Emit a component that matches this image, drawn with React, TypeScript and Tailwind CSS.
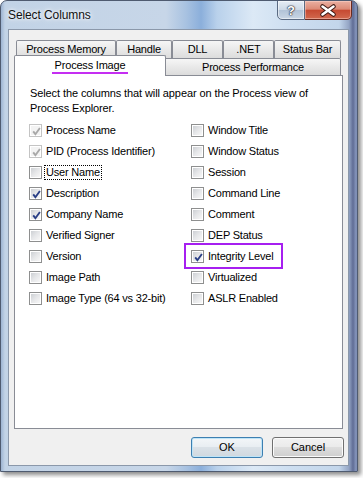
import React from "react";

type Item = { label: string; checked?: boolean; disabled?: boolean; focus?: boolean; highlight?: boolean };

const leftItems: Item[] = [
  { label: "Process Name", checked: true, disabled: true },
  { label: "PID (Process Identifier)", checked: true, disabled: true },
  { label: "User Name", focus: true },
  { label: "Description", checked: true },
  { label: "Company Name", checked: true },
  { label: "Verified Signer" },
  { label: "Version" },
  { label: "Image Path" },
  { label: "Image Type (64 vs 32-bit)" },
];

const rightItems: Item[] = [
  { label: "Window Title" },
  { label: "Window Status" },
  { label: "Session" },
  { label: "Command Line" },
  { label: "Comment" },
  { label: "DEP Status" },
  { label: "Integrity Level", checked: true, highlight: true },
  { label: "Virtualized" },
  { label: "ASLR Enabled" },
];

function CheckBox({ checked, disabled }: { checked?: boolean; disabled?: boolean }) {
  return (
    <span
      className={
        "relative block w-[13px] h-[13px] shrink-0 border bg-white p-px " +
        (disabled ? "border-[#c4c4c4]" : "border-[#8e8f8f]")
      }
    >
      <span
        className={
          "block w-full h-full " +
          (disabled
            ? "bg-[#f3f3f3]"
            : "bg-linear-to-br from-[#cdd0d4] via-[#e6e7e9] to-[#f7f7f7]")
        }
      />
      {checked && (
        <svg className="absolute left-0 top-0" width="13" height="13" viewBox="0 0 13 13">
          <path
            d="M3.2 6.4 L5.4 9.2 L9.9 3"
            fill="none"
            stroke={disabled ? "#a8a8a8" : "#2a3f86"}
            strokeWidth="1.9"
            strokeLinejoin="miter"
          />
        </svg>
      )}
    </span>
  );
}

function Row({ item }: { item: Item }) {
  return (
    <div className="relative flex h-[21px] items-center">
      <CheckBox checked={item.checked} disabled={item.disabled} />
      <span
        className={
          "ml-[2px] border px-px leading-[13px] whitespace-nowrap " +
          (item.focus ? "border-dotted border-black" : "border-transparent")
        }
      >
        {item.label}
      </span>
      {item.highlight && (
        <div className="absolute left-[-7px] top-[-3px] w-[99px] h-[26px] border-2 border-[#a61ff0]" />
      )}
    </div>
  );
}

const tabBase =
  "h-[18px] border border-b-0 border-[#898c95] rounded-t-[2px] bg-linear-to-b from-[#f6f6f6] via-[#e9e9e9] to-[#dcdcdc] flex items-center justify-center leading-none";

export default function App() {
  return (
    <div className="w-[363px] h-[478px] bg-white font-['Liberation_Sans',Arial,sans-serif] text-[11px] tracking-[-0.2px] text-black">
      <div className="w-[358px] h-[472px] rounded-t-[7px] border border-[#4f5b70] shadow-[3px_3px_4px_rgba(0,0,0,0.45)] bg-[linear-gradient(90deg,#9db4d2_0px,#c2d3e6_4px,#c7d6e8_165px,#a8c2e1_185px,#8bafdb_200px,#b9d1eb_216px,#dce9f6_252px,#cddef0_290px,#c3d6eb_338px,#93a4c4_348px,#5f6c95_352px,#8595bb_355px,#6b7aa3_357px)] flex flex-col overflow-hidden">
        {/* Title bar */}
        <div className="h-[28px] flex justify-between items-start shrink-0">
          <div className="pl-[7px] pt-[6px] text-[12px] leading-[16px] tracking-[-0.1px] text-[#111] [text-shadow:0_0_6px_#fff,0_0_3px_#fff]">
            Select Columns
          </div>
          <div className="flex -mt-px mr-[5px]">
            <div className="w-[28px] h-[20px] border border-[#5a6a82] rounded-bl-[5px] bg-[linear-gradient(#e6edf5_0%,#cdd9e6_48%,#b2c3d7_52%,#c9d6e5_100%)] flex items-center justify-center shadow-[inset_0_0_0_1px_rgba(255,255,255,0.5)]">
              <span className="text-white font-bold text-[13px] leading-none tracking-normal [text-shadow:0_0_1px_#223,0_0_1px_#223,0_0_2px_#223]">
                ?
              </span>
            </div>
            <div className="w-[47px] h-[20px] border border-l-0 border-[#6a2a20] rounded-br-[5px] bg-[linear-gradient(#eab0a2_0%,#dc8a76_45%,#c64a32_52%,#d2694f_100%)] shadow-[inset_0_0_0_1px_rgba(255,220,210,0.45)]">
              <svg width="46" height="19" viewBox="0 0 46 19">
                <path d="M17.5 5.5 L28.5 13.5 M28.5 5.5 L17.5 13.5" stroke="#3b1610" strokeWidth="4.6" strokeLinecap="round" fill="none" />
                <path d="M17.5 5.5 L28.5 13.5 M28.5 5.5 L17.5 13.5" stroke="#ffffff" strokeWidth="2.6" strokeLinecap="round" fill="none" />
              </svg>
            </div>
          </div>
        </div>

        {/* Client area */}
        <div className="ml-[7px] w-[341px] h-[437px] border border-[#8b98aa] bg-[#f0f0f0] pt-[10px] flex flex-col shrink-0">
          {/* Tab row 1 */}
          <div className="flex h-[18px] ml-[7px]">
            <div className={tabBase + " w-[100px]"}>Process Memory</div>
            <div className={tabBase + " w-[56px]"}>Handle</div>
            <div className={tabBase + " w-[51px]"}>DLL</div>
            <div className={tabBase + " w-[51px]"}>.NET</div>
            <div className={tabBase + " w-[67px]"}>Status Bar</div>
          </div>
          {/* Tab row 2 */}
          <div className="flex h-[17px] ml-[5px]">
            <div className="relative z-10 w-[152px] h-[21px] -mt-[3px] -mb-px border border-b-0 border-[#898c95] rounded-t-[2px] bg-white flex items-center justify-center pb-[1px] leading-none">
              Process Image
              <div className="absolute left-[37px] top-[16px] w-[76px] h-[2px] bg-[#c52ef2]" />
            </div>
            <div className="w-[175px] h-[17px] border-t border-r border-[#898c95] rounded-tr-[2px] bg-linear-to-b from-[#f6f6f6] via-[#e9e9e9] to-[#dcdcdc] flex items-center justify-center leading-none">
              Process Performance
            </div>
          </div>
          {/* Panel */}
          <div className="ml-[5px] w-[329px] h-[354px] border border-[#898c95] bg-white pl-[14px] pt-[10px]">
            <p className="ml-px leading-[15px] whitespace-nowrap tracking-[-0.1px]">
              Select the columns that will appear on the Process view of
              <br />
              Process Explorer.
            </p>
            <div className="flex mt-[4px]">
              <div className="w-[162px] flex flex-col">
                {leftItems.map((it) => (
                  <Row key={it.label} item={it} />
                ))}
              </div>
              <div className="flex flex-col">
                {rightItems.map((it) => (
                  <Row key={it.label} item={it} />
                ))}
              </div>
            </div>
          </div>
          {/* Buttons */}
          <div className="ml-[5px] w-[330px] mt-[8px] flex justify-end gap-[9px]">
            <div className="w-[72px] h-[21px] rounded-[3px] border border-[#3c7fb1] bg-[linear-gradient(#f3f6f8_0%,#e9eef2_45%,#dae1e7_50%,#d0d8df_100%)] shadow-[inset_0_0_0_1px_#bfe4f7] flex items-center justify-center leading-none tracking-normal">
              OK
            </div>
            <div className="w-[72px] h-[21px] rounded-[3px] border border-[#707070] bg-[linear-gradient(#f2f2f2_0%,#ebebeb_45%,#dddddd_50%,#cfcfcf_100%)] shadow-[inset_0_0_0_1px_#fbfbfb] flex items-center justify-center leading-none tracking-normal">
              Cancel
            </div>
          </div>
        </div>
      </div>
    </div>
  );
}
